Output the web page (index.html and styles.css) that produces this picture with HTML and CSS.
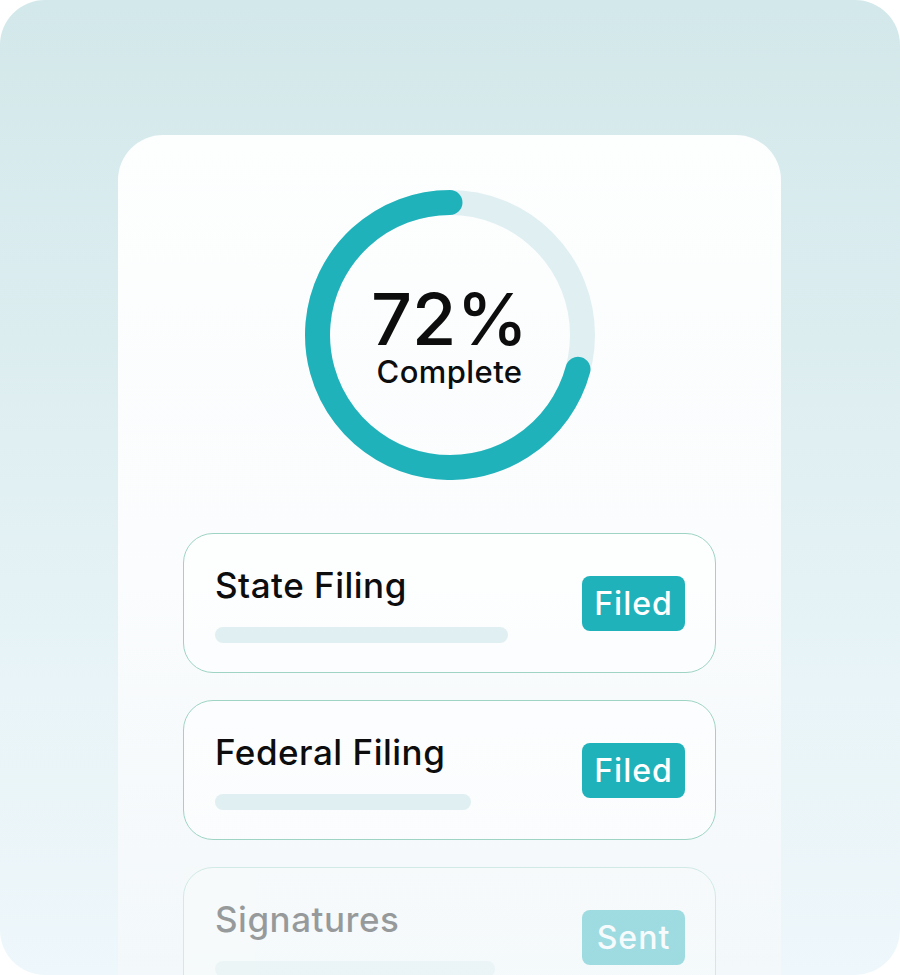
FILE: index.html
```html
<!DOCTYPE html>
<html lang="en">
<head>
    <meta charset="UTF-8">
    <meta name="viewport" content="width=device-width, initial-scale=1.0">
    <title>Filing Progress</title>
    <link rel="stylesheet" href="styles.css">
</head>
<body>
    <!-- Background panel -->
    <div class="panel">

        <!-- Progress Card -->
        <div class="card">
            <div class="ring">
                <svg class="ring-svg" width="290" height="290" viewBox="0 0 290 290">
                    <circle cx="145" cy="145" r="132.5" fill="none" stroke="#e0eff2" stroke-width="25"/>
                    <path d="M145 12.5 A132.5 132.5 0 1 0 273 179.3" fill="none" stroke="#20b2bb" stroke-width="25" stroke-linecap="round"/>
                </svg>
                <div class="ring-label">
                    <div class="ring-value">72%</div>
                    <div class="ring-caption">Complete</div>
                </div>
            </div>

            <div class="task-list">
                <div class="task">
                    <div class="task-info">
                        <div class="task-title">State Filing</div>
                        <div class="task-bar" style="width: 293px;"></div>
                    </div>
                    <span class="badge">Filed</span>
                </div>

                <div class="task">
                    <div class="task-info">
                        <div class="task-title">Federal Filing</div>
                        <div class="task-bar" style="width: 256px;"></div>
                    </div>
                    <span class="badge">Filed</span>
                </div>

                <div class="task faded">
                    <div class="task-info">
                        <div class="task-title">Signatures</div>
                        <div class="task-bar" style="width: 280px;"></div>
                    </div>
                    <span class="badge">Sent</span>
                </div>
            </div>
        </div>

    </div>
</body>
</html>
```

FILE: styles.css
```css
html, body {
    margin: 0;
    height: 100%;
    background: #ffffff;
}

body {
    font-family: 'Inter', 'Noto Sans', sans-serif;
    color: #0d0d0d;
    overflow: hidden;
}

.panel {
    width: 900px;
    height: 975px;
    border-radius: 45px;
    overflow: hidden;
    background: linear-gradient(180deg, #d3e8ea 0%, #dcedf0 35%, #e8f4f7 70%, #eef7fb 100%);
    padding-top: 135px;
    box-sizing: border-box;
}

.card {
    width: 663px;
    margin-left: 118px;
    height: 900px;
    border-radius: 45px 45px 0 0;
    background: linear-gradient(180deg, #fdfefe 0%, #fafcfd 50%, #f5f9fb 80%, rgba(244, 249, 251, 0.6) 100%);
    padding-top: 55px;
    box-sizing: border-box;
    display: flex;
    flex-direction: column;
    align-items: center;
}

/* Progress ring: svg and label share one grid cell */
.ring {
    display: grid;
    width: 290px;
    height: 290px;
}

.ring-svg, .ring-label {
    grid-area: 1 / 1;
}

.ring-label {
    align-self: center;
    justify-self: center;
    text-align: center;
    padding-top: 6px;
}

.ring-value {
    font-size: 72px;
    line-height: 60px;
    font-weight: 500;
}

.ring-caption {
    margin-top: 7px;
    font-size: 31px;
    line-height: 32px;
    font-weight: 500;
    letter-spacing: 0.4px;
}

.task-list {
    margin-top: 53px;
    width: 533px;
    display: flex;
    flex-direction: column;
    gap: 27px;
}

.task {
    height: 140px;
    box-sizing: border-box;
    border: 1.5px solid #9fd4c5;
    border-radius: 30px;
    background: rgba(255, 255, 255, 0.5);
    padding: 0 30px 0 31px;
    display: flex;
    align-items: center;
    justify-content: space-between;
}

.task-info {
    display: flex;
    flex-direction: column;
    padding-top: 2px;
}

.task-title {
    font-size: 35px;
    line-height: 40px;
    font-weight: 500;
    letter-spacing: 0.5px;
}

.task-bar {
    margin-top: 22px;
    height: 16px;
    border-radius: 8px;
    background: #e0eff1;
}

.badge {
    width: 103px;
    height: 55px;
    border-radius: 8px;
    background: #20b2bb;
    color: #fff;
    font-size: 32px;
    font-weight: 500;
    letter-spacing: 1px;
    display: flex;
    align-items: center;
    justify-content: center;
}

.task.faded {
    opacity: 0.4;
}
```
